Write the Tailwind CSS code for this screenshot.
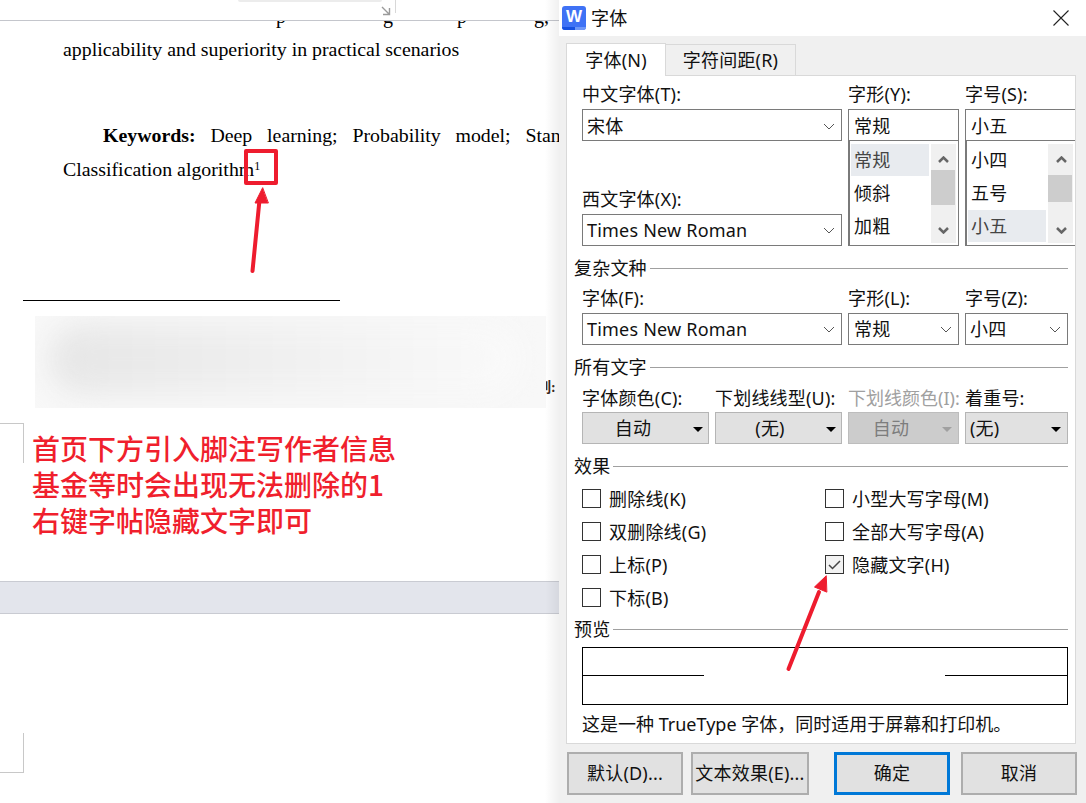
<!DOCTYPE html>
<html lang="zh-CN">
<head>
    <meta charset="UTF-8">
    <title>字体</title>
    <script src="https://cdn.jsdelivr.net/npm/@tailwindcss/browser@4"></script>
</head>
<body class="w-[1086px] h-[803px] overflow-hidden bg-white">
<div class="relative flex w-[1086px] h-[803px] overflow-hidden">

    <!-- document behind the dialog -->
    <div class="relative w-[559px] h-[803px] shrink-0 overflow-hidden bg-white text-black font-['Liberation_Serif','Noto_Sans_CJK_SC',serif]">
        <!-- line scrolled under the toolbar, only descenders show -->
        <div class="absolute left-0 top-[4px] w-full h-[21px] text-[20px] leading-[24px]">
            <span class="absolute left-[276px] top-0">p</span>
            <span class="absolute left-[383px] top-0">g</span>
            <span class="absolute left-[457px] top-0">p</span>
            <span class="absolute left-[534px] top-0">g,</span>
        </div>
        <div class="relative h-[21px] border-b border-[#c4c6cc] bg-white">
            <div class="absolute left-[238px] top-0 w-[144px] h-[2px] rounded-b bg-[#ececec]"></div>
            <svg class="absolute left-[381px] top-[6px]" width="10" height="10" viewBox="0 0 10 10" fill="none" stroke="#9a9a9a" stroke-width="1.4"><path d="M1 1l7.5 7.5M2 8.5h6.5V2"/></svg>
            <div class="absolute left-[395px] top-0 w-px h-[13px] bg-[#d8d8d8]"></div>
        </div>
        <div class="pl-[63px] w-[600px]">
            <p class="h-[58px] pt-[16px] text-[19.85px] leading-[24px] whitespace-nowrap">applicability and superiority in practical scenarios</p>
            <p class="mt-[44px] h-[34px] flex justify-between pl-[40px] w-[533px] text-[19.85px] leading-[24px] whitespace-nowrap"><b>Keywords:</b><span>Deep</span><span>learning;</span><span>Probability</span><span>model;</span><span>Standard</span></p>
            <p class="text-[19.85px] leading-[24px] whitespace-nowrap">Classification algorithm<sup class="text-[12px] leading-none -top-[6px]">1</sup></p>
        </div>

        <div class="mt-[119px] ml-[23px] w-[317px] h-px bg-black"></div>
        <div class="absolute left-[537px] top-[379px] text-[14px] leading-[18px] font-bold whitespace-nowrap text-[#3a2a20]">列:</div>
        <div class="relative mt-[15px] ml-[35px] w-[511px] h-[92px] overflow-hidden bg-[#f8f8f8]">
            <div class="absolute left-[14px] top-[8px] w-[470px] h-[70px] rounded-full bg-gradient-to-r from-[#e6e6e6] via-[#f0f0f0] to-[#fafafa] blur-[14px]"></div>
        </div>

        <!-- page crop marks -->
        <div class="absolute left-0 top-[423px] w-[24px] h-[40px] border-t border-r border-[#c8c8c8]"></div>
        <div class="absolute left-0 top-[733px] w-[24px] h-[40px] border-b border-r border-[#c8c8c8]"></div>

        <div class="absolute left-[32px] top-[430px] font-['Noto_Sans_CJK_SC',sans-serif] text-[28px] leading-[36px] font-medium text-[#f01f2d] whitespace-nowrap">
            <p>首页下方引入脚注写作者信息</p>
            <p>基金等时会出现无法删除的1</p>
            <p>右键字帖隐藏文字即可</p>
        </div>

        <div class="absolute left-0 top-[581px] w-full h-[33px] border-y border-[#c9cbd2] bg-[#e3e5ec]"></div>
        <div class="absolute right-0 top-0 w-[14px] h-full bg-gradient-to-r from-transparent to-[#0000000f]"></div>
    </div>

    <!-- font dialog -->
    <div class="w-[527px] h-[803px] shrink-0 flex flex-col bg-[#f0f0f0] font-['Noto_Sans','Noto_Sans_CJK_SC',sans-serif] text-[18px] tracking-[0.2px] text-[#111]">
        <div class="h-[36px] shrink-0 flex items-center bg-white pl-[3px]">
            <div class="relative w-[24px] h-[24px] rounded-[3px] overflow-hidden bg-[#3f72f5] flex items-start justify-center">
                <span class="font-['Liberation_Sans',sans-serif] font-bold text-[17px] leading-[21px] text-white">W</span>
                <div class="absolute left-0 bottom-0 w-full h-[3px] bg-[#6f97f8]"></div>
                <div class="absolute left-0 bottom-0 w-[13px] h-[3px] bg-[#1650e0]"></div>
            </div>
            <span class="ml-[5px] leading-[24px]">字体</span>
            <svg class="ml-auto mr-[17px]" width="16" height="16" viewBox="0 0 16 16" fill="none" stroke="#222" stroke-width="1.1"><path d="M.5.5l15 15M15.5.5l-15 15"/></svg>
        </div>

        <div class="h-[39px] shrink-0 flex items-end pl-[7px]">
            <div class="relative z-10 w-[100px] h-[33px] -mb-px pt-[1px] border border-b-0 border-[#d9d9d9] bg-white flex items-center justify-center">字体(N)</div>
            <div class="w-[130px] h-[31px] border border-l-0 border-b-0 border-[#d9d9d9] bg-[#f0f0f0] flex items-center justify-center">字符间距(R)</div>
        </div>

        <div class="relative ml-[7px] w-[510px] h-[669px] shrink-0 overflow-hidden border border-[#d9d9d9] bg-white pl-[15px] pt-[6px]">
            <div class="flex gap-[6px] leading-[24px]">
                <div class="w-[260px] shrink-0">
                    <div class="h-[24px]">中文字体(T):</div>
                    <div class="mt-[3px] h-[32px] border border-[#7a7a7a] flex items-center pl-[4px] pr-[6px] pt-[2px]">
                        <span>宋体</span>
                        <svg class="ml-auto" width="12" height="7" viewBox="0 0 12 7" fill="none" stroke="#555" stroke-width="1"><path d="M1 1l5 5 5-5"/></svg>
                    </div>
                    <div class="mt-[46px] h-[24px]">西文字体(X):</div>
                    <div class="mt-[3px] h-[32px] border border-[#7a7a7a] flex items-center pl-[4px] pr-[6px]">
                        <span>Times New Roman</span>
                        <svg class="ml-auto" width="12" height="7" viewBox="0 0 12 7" fill="none" stroke="#555" stroke-width="1"><path d="M1 1l5 5 5-5"/></svg>
                    </div>
                </div>
                <div class="w-[111px] shrink-0">
                    <div class="h-[24px]">字形(Y):</div>
                    <div class="mt-[3px] h-[32px] border border-[#7a7a7a] flex items-center pl-[5px] pt-[2px]">常规</div>
                    <div class="relative h-[106px] -mt-px border border-l-2 border-[#7a7a7a] pl-[1px] pt-[3px]">
                        <div class="w-[78px] h-[32px] pl-[3px] bg-[#e8ebef] text-[#444] leading-[32px]">常规</div>
                        <div class="mt-px h-[33px] pl-[3px] leading-[33px]">倾斜</div>
                        <div class="h-[33px] pl-[3px] leading-[33px]">加粗</div>
                        <div class="absolute right-[2px] top-[3px] w-[25px] h-[99px] bg-[#f0f0f0]">
                            <svg class="absolute left-[7px] top-[12px]" width="11" height="7" viewBox="0 0 11 7" fill="none" stroke="#666" stroke-width="2.5"><path d="M1 6l4.5-4.5L10 6"/></svg>
                            <div class="absolute left-0 top-[26px] w-[24px] h-[35px] bg-[#cdcdcd]"></div>
                            <svg class="absolute left-[7px] top-[83px]" width="11" height="7" viewBox="0 0 11 7" fill="none" stroke="#666" stroke-width="2.5"><path d="M1 1l4.5 4.5L10 1"/></svg>
                        </div>
                    </div>
                </div>
                <div class="w-[115px] shrink-0">
                    <div class="h-[24px]">字号(S):</div>
                    <div class="mt-[3px] h-[32px] border border-r-0 border-[#7a7a7a] flex items-center pl-[5px] pt-[2px]">小五</div>
                    <div class="relative h-[106px] -mt-px border border-l-2 border-r-0 border-[#7a7a7a] pl-[1px] pt-[3px]">
                        <div class="h-[33px] pl-[3px] leading-[33px]">小四</div>
                        <div class="h-[33px] pl-[3px] leading-[33px]">五号</div>
                        <div class="w-[78px] h-[32px] pl-[3px] bg-[#e8ebef] text-[#444] leading-[32px]">小五</div>
                        <div class="absolute left-[81px] top-[3px] w-[25px] h-[99px] bg-[#f0f0f0]">
                            <svg class="absolute left-[8px] top-[12px]" width="11" height="7" viewBox="0 0 11 7" fill="none" stroke="#666" stroke-width="2.5"><path d="M1 6l4.5-4.5L10 6"/></svg>
                            <div class="absolute left-0 top-[31px] w-[24px] h-[27px] bg-[#cdcdcd]"></div>
                            <svg class="absolute left-[8px] top-[83px]" width="11" height="7" viewBox="0 0 11 7" fill="none" stroke="#666" stroke-width="2.5"><path d="M1 1l4.5 4.5L10 1"/></svg>
                        </div>
                    </div>
                </div>
            </div>

            <div class="-ml-[8px] mt-[10px] mr-[7px] flex items-center gap-[3px] h-[24px]"><span class="shrink-0">复杂文种</span><div class="grow h-px bg-[#a0a0a0]"></div></div>
            <div class="mt-[6px] mr-[7px] flex gap-[6px] leading-[24px]">
                <div class="w-[260px] shrink-0">
                    <div class="h-[24px]">字体(F):</div>
                    <div class="mt-[3px] h-[32px] border border-[#7a7a7a] flex items-center pl-[4px] pr-[6px]">
                        <span>Times New Roman</span>
                        <svg class="ml-auto" width="12" height="7" viewBox="0 0 12 7" fill="none" stroke="#555" stroke-width="1"><path d="M1 1l5 5 5-5"/></svg>
                    </div>
                </div>
                <div class="w-[111px] shrink-0">
                    <div class="h-[24px]">字形(L):</div>
                    <div class="mt-[3px] h-[32px] border border-[#7a7a7a] flex items-center pl-[5px] pr-[6px]">
                        <span>常规</span>
                        <svg class="ml-auto" width="12" height="7" viewBox="0 0 12 7" fill="none" stroke="#555" stroke-width="1"><path d="M1 1l5 5 5-5"/></svg>
                    </div>
                </div>
                <div class="w-[103px] shrink-0">
                    <div class="h-[24px]">字号(Z):</div>
                    <div class="mt-[3px] h-[32px] border border-[#7a7a7a] flex items-center pl-[4px] pr-[6px]">
                        <span>小四</span>
                        <svg class="ml-auto" width="12" height="7" viewBox="0 0 12 7" fill="none" stroke="#555" stroke-width="1"><path d="M1 1l5 5 5-5"/></svg>
                    </div>
                </div>
            </div>

            <div class="-ml-[8px] mt-[10px] mr-[7px] flex items-center gap-[3px] h-[24px]"><span class="shrink-0">所有文字</span><div class="grow h-px bg-[#a0a0a0]"></div></div>
            <div class="mt-[7px] flex gap-[6px] leading-[24px]">
                <div class="w-[127px] shrink-0">
                    <div class="h-[24px] whitespace-nowrap">字体颜色(C):</div>
                    <div class="relative mt-[2px] h-[32px] border border-[#b5b5b5] bg-[#e1e1e1] flex items-center justify-center pr-[25px]">自动
                        <div class="absolute right-[5px] top-[14px] w-0 h-0 border-x-[5px] border-t-[5px] border-x-transparent border-t-black"></div>
                    </div>
                </div>
                <div class="w-[127px] shrink-0">
                    <div class="h-[24px] whitespace-nowrap">下划线线型(U):</div>
                    <div class="relative mt-[2px] h-[32px] border border-[#b5b5b5] bg-[#e1e1e1] flex items-center justify-center pr-[17px]">(无)
                        <div class="absolute right-[5px] top-[14px] w-0 h-0 border-x-[5px] border-t-[5px] border-x-transparent border-t-black"></div>
                    </div>
                </div>
                <div class="w-[111px] shrink-0">
                    <div class="h-[24px] whitespace-nowrap tracking-normal text-[#a0a0a0]">下划线颜色(I):</div>
                    <div class="relative mt-[2px] h-[32px] border border-[#bdbdbd] bg-[#cccccc] flex items-center justify-center pr-[25px] text-[#7d7d7d]">自动
                        <div class="absolute right-[6px] top-[14px] w-0 h-0 border-x-[5px] border-t-[5px] border-x-transparent border-t-[#a0a0a0]"></div>
                    </div>
                </div>
                <div class="w-[103px] shrink-0">
                    <div class="h-[24px] whitespace-nowrap">着重号:</div>
                    <div class="relative mt-[2px] h-[32px] border border-[#b5b5b5] bg-[#e1e1e1] flex items-center pl-[4px]">(无)
                        <div class="absolute right-[6px] top-[14px] w-0 h-0 border-x-[5px] border-t-[5px] border-x-transparent border-t-black"></div>
                    </div>
                </div>
            </div>

            <div class="-ml-[8px] mt-[10px] mr-[7px] flex items-center gap-[3px] h-[24px]"><span class="shrink-0">效果</span><div class="grow h-px bg-[#a0a0a0]"></div></div>
            <div class="mt-[11px] grid grid-cols-[243px_1fr] gap-y-[14px]">
                <label class="flex items-center h-[19px] gap-[8px]"><span class="w-[19px] h-[19px] border border-[#333] bg-white"></span><span class="pt-[2px]">删除线(K)</span></label>
                <label class="flex items-center h-[19px] gap-[8px]"><span class="w-[19px] h-[19px] border border-[#333] bg-white"></span><span class="pt-[2px]">小型大写字母(M)</span></label>
                <label class="flex items-center h-[19px] gap-[8px]"><span class="w-[19px] h-[19px] border border-[#333] bg-white"></span><span class="pt-[2px]">双删除线(G)</span></label>
                <label class="flex items-center h-[19px] gap-[8px]"><span class="w-[19px] h-[19px] border border-[#333] bg-white"></span><span class="pt-[2px]">全部大写字母(A)</span></label>
                <label class="flex items-center h-[19px] gap-[8px]"><span class="w-[19px] h-[19px] border border-[#333] bg-white"></span><span class="pt-[2px]">上标(P)</span></label>
                <label class="flex items-center h-[19px] gap-[8px]"><span class="flex items-center justify-center w-[19px] h-[19px] border border-[#333] bg-[#f2f2f2]"><svg width="13" height="10" viewBox="0 0 13 10" fill="none" stroke="#444" stroke-width="1.5"><path d="M1 5l3.5 3.5L12 1"/></svg></span><span class="pt-[2px]">隐藏文字(H)</span></label>
                <label class="flex items-center h-[19px] gap-[8px]"><span class="w-[19px] h-[19px] border border-[#333] bg-white"></span><span class="pt-[2px]">下标(B)</span></label>
            </div>

            <div class="-ml-[8px] mt-[10px] mr-[7px] flex items-center gap-[3px] h-[24px]"><span class="shrink-0">预览</span><div class="grow h-px bg-[#a0a0a0]"></div></div>
            <div class="relative mt-[6px] mr-[7px] h-[58px] border border-black">
                <div class="absolute left-0 top-[27px] w-[121px] h-px bg-black"></div>
                <div class="absolute right-0 top-[27px] w-[122px] h-px bg-black"></div>
            </div>
            <div class="mt-[7px] h-[24px] leading-[24px] tracking-normal whitespace-nowrap">这是一种 TrueType 字体，同时适用于屏幕和打印机。</div>
        </div>

        <div class="mt-[8px] ml-[8px] flex items-start">
            <button class="w-[116px] h-[43px] border-2 border-[#adadad] bg-[#e1e1e1]">默认(D)...</button>
            <button class="ml-[8px] w-[118px] h-[43px] border-2 border-[#adadad] bg-[#e1e1e1] whitespace-nowrap">文本效果(E)...</button>
            <button class="ml-[25px] w-[116px] h-[43px] border-[3px] border-[#0078d7] bg-[#e1e1e1]">确定</button>
            <button class="ml-[11px] w-[116px] h-[43px] border-2 border-[#adadad] bg-[#e1e1e1]">取消</button>
        </div>
    </div>

    <!-- red arrows and the box drawn over the screenshot -->
    <div class="absolute left-[244px] top-[149px] w-[34px] h-[36px] rounded-[2px] border-[4px] border-[#ee1c2e]"></div>
    <svg class="absolute left-0 top-0 pointer-events-none" width="1086" height="803" fill="#ee1c2e" stroke="#ee1c2e" stroke-linecap="round">
        <path d="M252.5 271L259.5 200" stroke-width="4" fill="none"/>
        <path d="M262.5 188L255 203L268 203Z" stroke-width="1"/>
        <path d="M788.5 669L819 592" stroke-width="4" fill="none"/>
        <path d="M826 576L814.5 587L826.5 592Z" stroke-width="1"/>
    </svg>
</div>
</body>
</html>
